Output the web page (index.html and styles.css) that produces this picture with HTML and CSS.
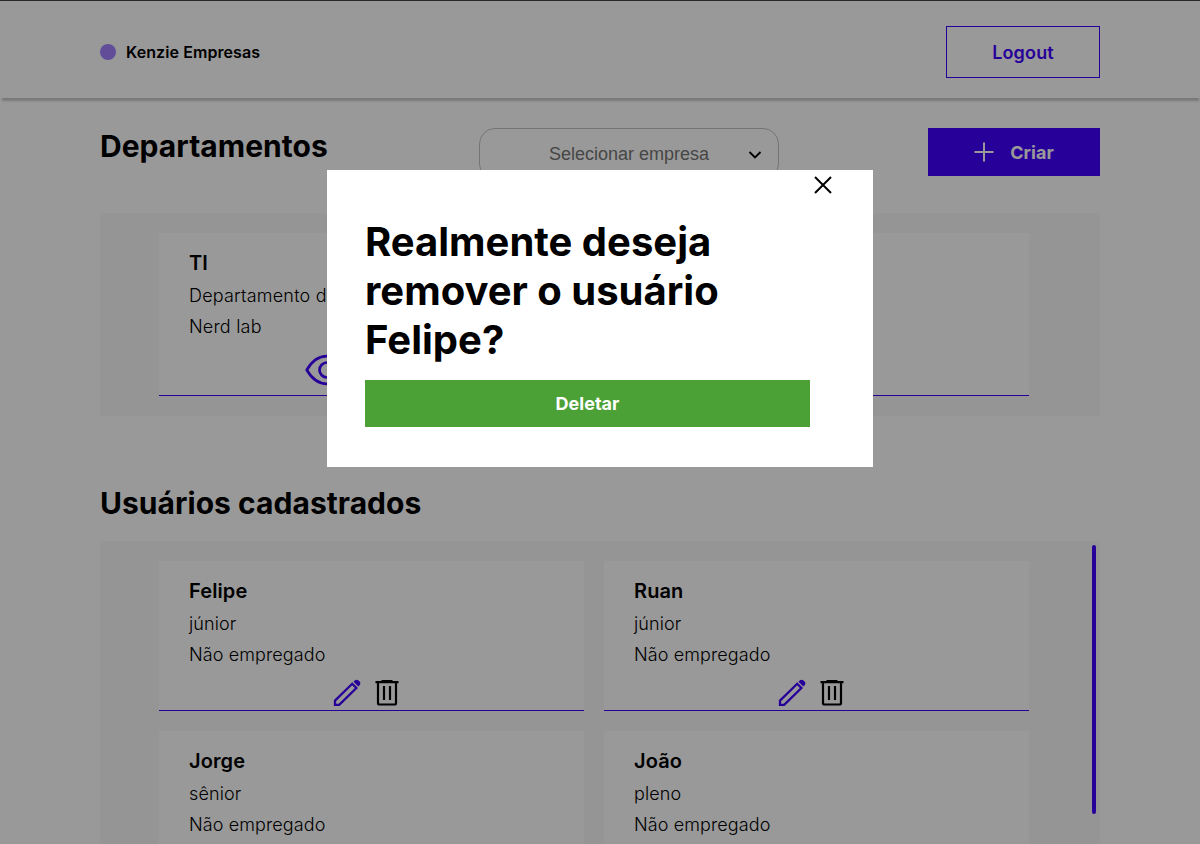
FILE: index.html
```
<!DOCTYPE html>
<html lang="pt-BR">
<head>
<meta charset="utf-8">
<title>Kenzie Empresas</title>
<link rel="stylesheet" href="styles.css">
</head>
<body>
<svg class="sprite" aria-hidden="true">
  <symbol id="pencil" viewBox="0 0 28 28"><path d="M2 21.600 19.200 4.800l4.200 4.200L6.200 25.800H2z" fill="none" stroke="currentColor" stroke-width="2.300"/><path d="M20.500 2.700l1.300-1.300c1-1 2.700-1 3.700 0l1.100 1.100c1 1 1 2.700 0 3.700l-1.300 1.300z" fill="currentColor"/></symbol>
  <symbol id="trash" viewBox="0 0 24 28"><path d="M3 4v20q0 1.500 1.500 1.500h15q1.500 0 1.500-1.500V4M.5 3.200h23M6.500 2h11M9 7v14M15 7v14" fill="none" stroke="currentColor" stroke-width="2.200"/></symbol>
  <symbol id="eye" viewBox="0 0 44 32"><path d="M1.800 16C7 7 14 2.200 22 2.200s15 4.800 20.200 13.800c-5.200 9-12.200 13.800-20.200 13.800S7 25 1.800 16z" fill="none" stroke="currentColor" stroke-width="2.700"/><circle cx="22" cy="16" r="7.500" fill="none" stroke="currentColor" stroke-width="2.700"/></symbol>
</svg>
<header class="header">
  <div class="brand"><span class="dot"></span>Kenzie Empresas</div>
  <button class="logout">Logout</button>
</header>
<main>
  <section class="toolbar">
    <h1 class="title">Departamentos</h1>
    <div class="select"><span>Selecionar empresa</span><svg class="chevron" viewBox="0 0 14 8"><path d="M1.500 1 7 6.500 12.500 1" fill="none" stroke="currentColor" stroke-width="1.800"/></svg></div>
    <button class="create"><svg class="plus" viewBox="0 0 20 20"><path d="M10 .500v19M.500 10h19" stroke="currentColor" stroke-width="2"/></svg>Criar</button>
  </section>
  <ul class="panel departments">
    <li class="card department">
      <h2 class="name">TI</h2><p>Departamento de TI</p><p>Nerd lab</p>
      <div class="actions"><svg class="icon-eye"><use href="#eye"/></svg></div>
    </li>
  </ul>
  <h1 class="title users-title">Usuários cadastrados</h1>
  <ul class="panel users">
    <li class="card"><h2 class="name">Felipe</h2><p>júnior</p><p>Não empregado</p><div class="actions"><svg class="icon-pencil"><use href="#pencil"/></svg><svg class="icon-trash"><use href="#trash"/></svg></div></li>
    <li class="card"><h2 class="name">Ruan</h2><p>júnior</p><p>Não empregado</p><div class="actions"><svg class="icon-pencil"><use href="#pencil"/></svg><svg class="icon-trash"><use href="#trash"/></svg></div></li>
    <li class="card"><h2 class="name">Jorge</h2><p>sênior</p><p>Não empregado</p></li>
    <li class="card"><h2 class="name">João</h2><p>pleno</p><p>Não empregado</p></li>
  </ul>
</main>
<div class="overlay">
  <div class="modal">
    <svg class="close" viewBox="0 0 18 18"><path d="M1 1l16 16M17 1 1 17" stroke="currentColor" stroke-width="2"/></svg>
    <h1 class="question">Realmente deseja remover o usuário Felipe?</h1>
    <button class="delete">Deletar</button>
  </div>
</div>
</body>
</html>
```
FILE: styles.css
```
* { box-sizing: border-box; margin: 0; padding: 0; }
body { height: 844px; overflow: hidden; background: #fff; color: #000; font-family: Inter, sans-serif; display: flex; flex-direction: column; }
button { font-family: inherit; border: 0; font-size: 18px; font-weight: 600; }
ul { list-style: none; }
svg { display: block; }
.sprite { display: none; }
.header { flex: none; height: 98px; padding: 5px 100px 0; border-top: 1px solid #464146; display: flex; align-items: center; justify-content: space-between; box-shadow: 0 4px 2px -1.5px rgba(0, 0, 0, .21); }
.brand { display: flex; align-items: center; gap: 10px; font-size: 16px; font-weight: 600; letter-spacing: .08px; }
.dot { width: 16px; height: 16px; border-radius: 50%; background: #a480ff; }
.logout { width: 154px; height: 52px; background: #fff; color: #4200ff; border: 1px solid #4200ff; letter-spacing: .15px; padding-top: 1px; }
main { flex: 1; min-height: 0; padding: 30px 100px 0; display: flex; flex-direction: column; }
.toolbar { flex: none; height: 85px; display: flex; justify-content: space-between; align-items: flex-start; }
.title { flex: none; font-size: 30px; line-height: 36px; font-weight: 700; letter-spacing: .04px; }
.toolbar .title { width: 230px; white-space: nowrap; }
.select { width: 300px; height: 52px; border: 1px solid #c4c4c4; border-radius: 16px; padding-right: 16px; display: flex; align-items: center; color: #757575; font-family: "Liberation Sans", Arial, sans-serif; font-size: 18px; }
.select span { flex: 1; padding-left: 30px; text-align: center; }
.chevron { width: 14px; height: 8px; color: #000; margin-top: 2px; }
.create { width: 172px; height: 48px; background: #4200ff; color: #fff; display: flex; align-items: center; justify-content: center; gap: 16px; font-weight: 700; }
.plus { width: 20px; height: 20px; }
.panel { background: #f8f8f8; padding: 20px 71px 20px 59px; }
.departments { flex: none; height: 203px; }
.users-title { margin: 69px 0 20px; }
.card { height: 150px; padding: 15px 30px 0; background: #fff; border-bottom: 1px solid #4200ff; }
.department { height: 163px; }
.name { font-size: 20px; line-height: 30px; font-weight: 600; margin-bottom: 2px; letter-spacing: .1px; }
.card p { font-size: 18px; line-height: 31px; font-weight: 300; letter-spacing: .11px; }
.department p { letter-spacing: .2px; }
.actions { display: flex; justify-content: center; gap: 14px; padding: 9px 12px 0 0; }
.department .actions { padding: 12px 534px 0 0; }
.icon-eye { width: 44px; height: 32px; color: #4200ff; flex: none; }
.icon-pencil { width: 28px; height: 28px; color: #4200ff; flex: none; }
.icon-trash { width: 24px; height: 28px; flex: none; }
.users { flex: 1; min-height: 0; overflow: hidden; position: relative; display: grid; grid-template-columns: 1fr 1fr; gap: 20px; align-content: start; }
.users::after { content: ""; position: absolute; top: 4px; right: 4px; width: 4px; height: 269px; border-radius: 2px; background: #4200ff; }
.overlay { position: fixed; inset: 0; background: rgba(0, 0, 0, .4); }
.modal { width: 546px; height: 297px; margin: 170px 0 0 327px; padding: 6px 38px 0; background: #fff; display: flex; flex-direction: column; }
.close { width: 18px; height: 18px; margin-left: 449px; }
.question { font-size: 40px; line-height: 49px; font-weight: 700; width: 445px; margin-top: 23px; }
.delete { width: 445px; height: 47px; margin-top: 16px; background: #4ba036; color: #fff; font-weight: 700; }
```
